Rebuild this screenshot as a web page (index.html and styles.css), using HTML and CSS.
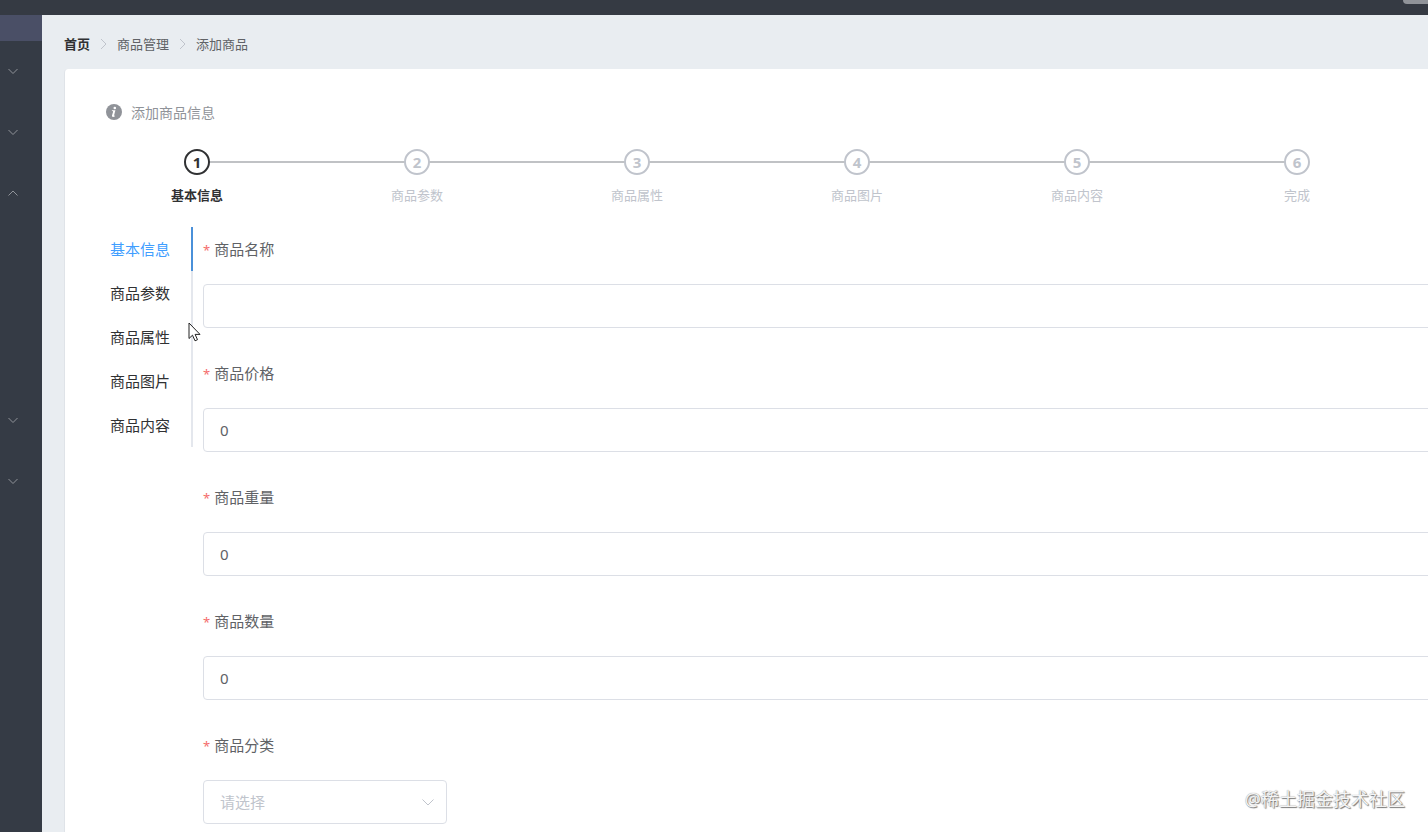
FILE: index.html
```html
<!DOCTYPE html>
<html lang="zh-CN">
  <head>
    <meta charset="UTF-8" />
    <meta name="viewport" content="width=device-width, initial-scale=1.0" />
    <title>添加商品</title>
    <link rel="stylesheet" href="styles.css">
  </head>
  <body>
    <header class="header"><button class="logout" type="button" aria-label="退出"></button></header>

    <div class="container">
      <aside class="sidebar">
        <button class="toggle" type="button" aria-label="折叠菜单"></button>
        <button class="menu-item" type="button" aria-label="用户管理">
          <svg class="arrow" viewBox="0 0 12 12"><path d="M1.500 4L6 8.500 10.500 4" /></svg>
        </button>
        <button class="menu-item" type="button" aria-label="权限管理">
          <svg class="arrow" viewBox="0 0 12 12"><path d="M1.500 4L6 8.500 10.500 4" /></svg>
        </button>
        <button class="menu-item" type="button" aria-label="商品管理">
          <svg class="arrow" viewBox="0 0 12 12"><path d="M1.500 8.500L6 4l4.500 4.500" /></svg>
        </button>
        <div class="submenu"></div>
        <button class="menu-item" type="button" aria-label="订单管理">
          <svg class="arrow" viewBox="0 0 12 12"><path d="M1.500 4L6 8.500 10.500 4" /></svg>
        </button>
        <button class="menu-item" type="button" aria-label="数据统计">
          <svg class="arrow" viewBox="0 0 12 12"><path d="M1.500 4L6 8.500 10.500 4" /></svg>
        </button>
      </aside>

      <main class="main">
        <nav class="breadcrumb">
          <a class="home" href="#">首页</a>
          <svg class="separator" viewBox="0 0 9 12"><path d="M2 1l5 5-5 5" /></svg>
          <span>商品管理</span>
          <svg class="separator" viewBox="0 0 9 12"><path d="M2 1l5 5-5 5" /></svg>
          <span>添加商品</span>
        </nav>

        <section class="card">
          <div class="alert">
            <svg class="info" viewBox="0 0 16 16">
              <circle cx="8" cy="8" r="8" />
              <path d="M8.800 2.700a1.300 1.300 0 1 1 0 2.600 1.300 1.300 0 0 1 0-2.600zM6 6.300h3.400l-1.300 5c-.1.500.2.600 1 .2l-.2.800c-1 .8-3.400 1.100-2.900-.7l1.100-3.800c.1-.5-.3-.7-1.300-.7z" />
            </svg>
            <span>添加商品信息</span>
          </div>

          <ol class="steps">
            <li class="step active"><span class="num">1</span><span class="title">基本信息</span></li>
            <li class="step"><span class="num">2</span><span class="title">商品参数</span></li>
            <li class="step"><span class="num">3</span><span class="title">商品属性</span></li>
            <li class="step"><span class="num">4</span><span class="title">商品图片</span></li>
            <li class="step"><span class="num">5</span><span class="title">商品内容</span></li>
            <li class="step"><span class="num">6</span><span class="title">完成</span></li>
          </ol>

          <div class="content">
            <div class="tabs">
              <button class="tab active" type="button">基本信息</button>
              <button class="tab" type="button">商品参数</button>
              <button class="tab" type="button">商品属性</button>
              <button class="tab" type="button">商品图片</button>
              <button class="tab" type="button">商品内容</button>
            </div>

            <form class="form">
              <div class="form-item">
                <label for="name">商品名称</label>
                <input type="text" id="name" name="name" />
              </div>
              <div class="form-item">
                <label for="price">商品价格</label>
                <input type="text" id="price" name="price" value="0" />
              </div>
              <div class="form-item">
                <label for="weight">商品重量</label>
                <input type="text" id="weight" name="weight" value="0" />
              </div>
              <div class="form-item">
                <label for="number">商品数量</label>
                <input type="text" id="number" name="number" value="0" />
              </div>
              <div class="form-item">
                <label for="category">商品分类</label>
                <div class="select">
                  <select id="category" name="category">
                    <option value="">请选择</option>
                  </select>
                  <svg class="select-arrow" viewBox="0 0 14 14"><path d="M1.500 4.500L7 10l5.500-5.500" /></svg>
                </div>
              </div>
            </form>
          </div>
        </section>
      </main>
    </div>

    <svg class="cursor" viewBox="0 0 13 20">
      <path d="M1 1v15.500l3.500-3.300 2.500 5.600 2.500-1.100-2.400-5.300H12z" />
    </svg>
    <div class="watermark">@稀土掘金技术社区</div>
  </body>
</html>
```

FILE: styles.css
```css
* {
  box-sizing: border-box;
}

body {
  margin: 0;
  height: 100vh;
  display: flex;
  flex-direction: column;
  overflow: hidden;
  position: relative;
  background: #e9edf1;
  color: #606266;
  font-family: 'Noto Sans', 'Noto Sans CJK SC', sans-serif;
  font-size: 15px;
}

button,
input,
select {
  font: inherit;
  color: inherit;
}

button {
  border: none;
  padding: 0;
  background: none;
  cursor: pointer;
}

svg {
  fill: none;
  stroke: #c0c4cc;
  flex-shrink: 0;
}

.header {
  height: 15px;
  flex-shrink: 0;
  display: flex;
  justify-content: flex-end;
  align-items: flex-start;
  background: #353a43;
}

.logout {
  width: 25px;
  height: 4px;
  background: #909399;
  border-bottom-left-radius: 4px;
}

.container {
  flex: 1;
  min-height: 0;
  display: flex;
}

.sidebar {
  width: 42px;
  flex-shrink: 0;
  display: flex;
  flex-direction: column;
  background: #353b45;
}

.toggle {
  height: 26px;
  background: #4a4f66;
}

.menu-item {
  height: 61px;
  padding: 0 0 2px 7px;
  display: flex;
  align-items: center;
}

.arrow {
  width: 12px;
  height: 12px;
  stroke: #909399;
}

.submenu {
  height: 166px;
}

.main {
  flex: 1;
  min-width: 0;
  display: flex;
  flex-direction: column;
  padding-left: 22px;
}

.breadcrumb {
  height: 54px;
  flex-shrink: 0;
  padding-top: 3px;
  display: flex;
  align-items: center;
  gap: 9px;
  font-size: 13px;
  line-height: 18px;
}

.home {
  color: #303133;
  font-weight: bold;
  text-decoration: none;
}

.separator {
  width: 9px;
  height: 12px;
}

.card {
  flex: 1;
  min-height: 0;
  overflow: hidden;
  padding: 32px 0 0 22px;
  background: #fff;
  border-left: 1px solid #dfe3e8;
  border-top-left-radius: 4px;
}

.alert {
  height: 22px;
  padding-left: 19px;
  display: flex;
  align-items: center;
  gap: 9px;
  color: #909399;
  font-size: 14px;
}

.info {
  width: 16px;
  height: 16px;
  stroke: none;
}

.info circle {
  fill: #909399;
}

.info path {
  fill: #fff;
}

.steps {
  margin: 26px 21px 0 0;
  padding: 0;
  display: grid;
  grid-template-columns: repeat(6, 1fr);
  list-style: none;
  color: #c0c4cc;
}

.step {
  position: relative;
  display: flex;
  flex-direction: column;
  align-items: center;
  gap: 9px;
}

/* line to the next step */
.step:not(:last-child)::after {
  content: '';
  position: absolute;
  top: 12px;
  left: 50%;
  width: 100%;
  height: 2px;
  background: #c0c2c5;
}

.num {
  position: relative;
  z-index: 1;
  width: 26px;
  height: 26px;
  border: 2px solid;
  border-radius: 50%;
  background: #fff;
  line-height: 22px;
  text-align: center;
  font-weight: bold;
}

.title {
  font-size: 13px;
  line-height: 22px;
}

.step.active {
  color: #303133;
}

.step.active .title {
  font-weight: bold;
}

.content {
  margin-top: 21px;
  display: flex;
  align-items: flex-start;
  gap: 10px;
}

.tabs {
  width: 106px;
  flex-shrink: 0;
  display: flex;
  flex-direction: column;
  border-right: 2px solid #e4e7ed;
}

.tab {
  height: 44px;
  margin-right: -2px;
  padding: 0 21px 2px 0;
  border-right: 2px solid transparent;
  text-align: right;
  color: #303133;
}

.tab.active {
  color: #409eff;
  border-right-color: #4a90d9;
}

/* the form runs past the edge of the card */
.form {
  flex: 1;
  margin-right: -24px;
  padding-top: 1px;
}

.form-item {
  margin-bottom: 24px;
}

.form-item label {
  display: block;
  height: 44px;
  margin-bottom: 12px;
  line-height: 42px;
}

.form-item label::before {
  content: '*';
  margin-right: 4px;
  color: #f56c6c;
  font-size: 13px;
}

.form-item input,
.form-item select {
  display: block;
  width: 100%;
  height: 44px;
  padding: 0 16px;
  border: 1px solid #dcdfe6;
  border-radius: 4px;
  background: #fff;
  outline: none;
}

.select {
  position: relative;
  width: 244px;
}

.form-item select {
  appearance: none;
  color: #c0c4cc;
}

.select-arrow {
  position: absolute;
  top: 15px;
  right: 12px;
  width: 14px;
  height: 14px;
  pointer-events: none;
}

.cursor {
  position: absolute;
  top: 322px;
  left: 188px;
  width: 13px;
  height: 20px;
  fill: #fff;
  stroke: #222;
}

.watermark {
  position: absolute;
  right: 23px;
  bottom: 20px;
  color: #f4f4f4;
  font-size: 18px;
  line-height: 26px;
  text-shadow: 1px 1px 1px #777, 0 0 1px #888;
}
```
